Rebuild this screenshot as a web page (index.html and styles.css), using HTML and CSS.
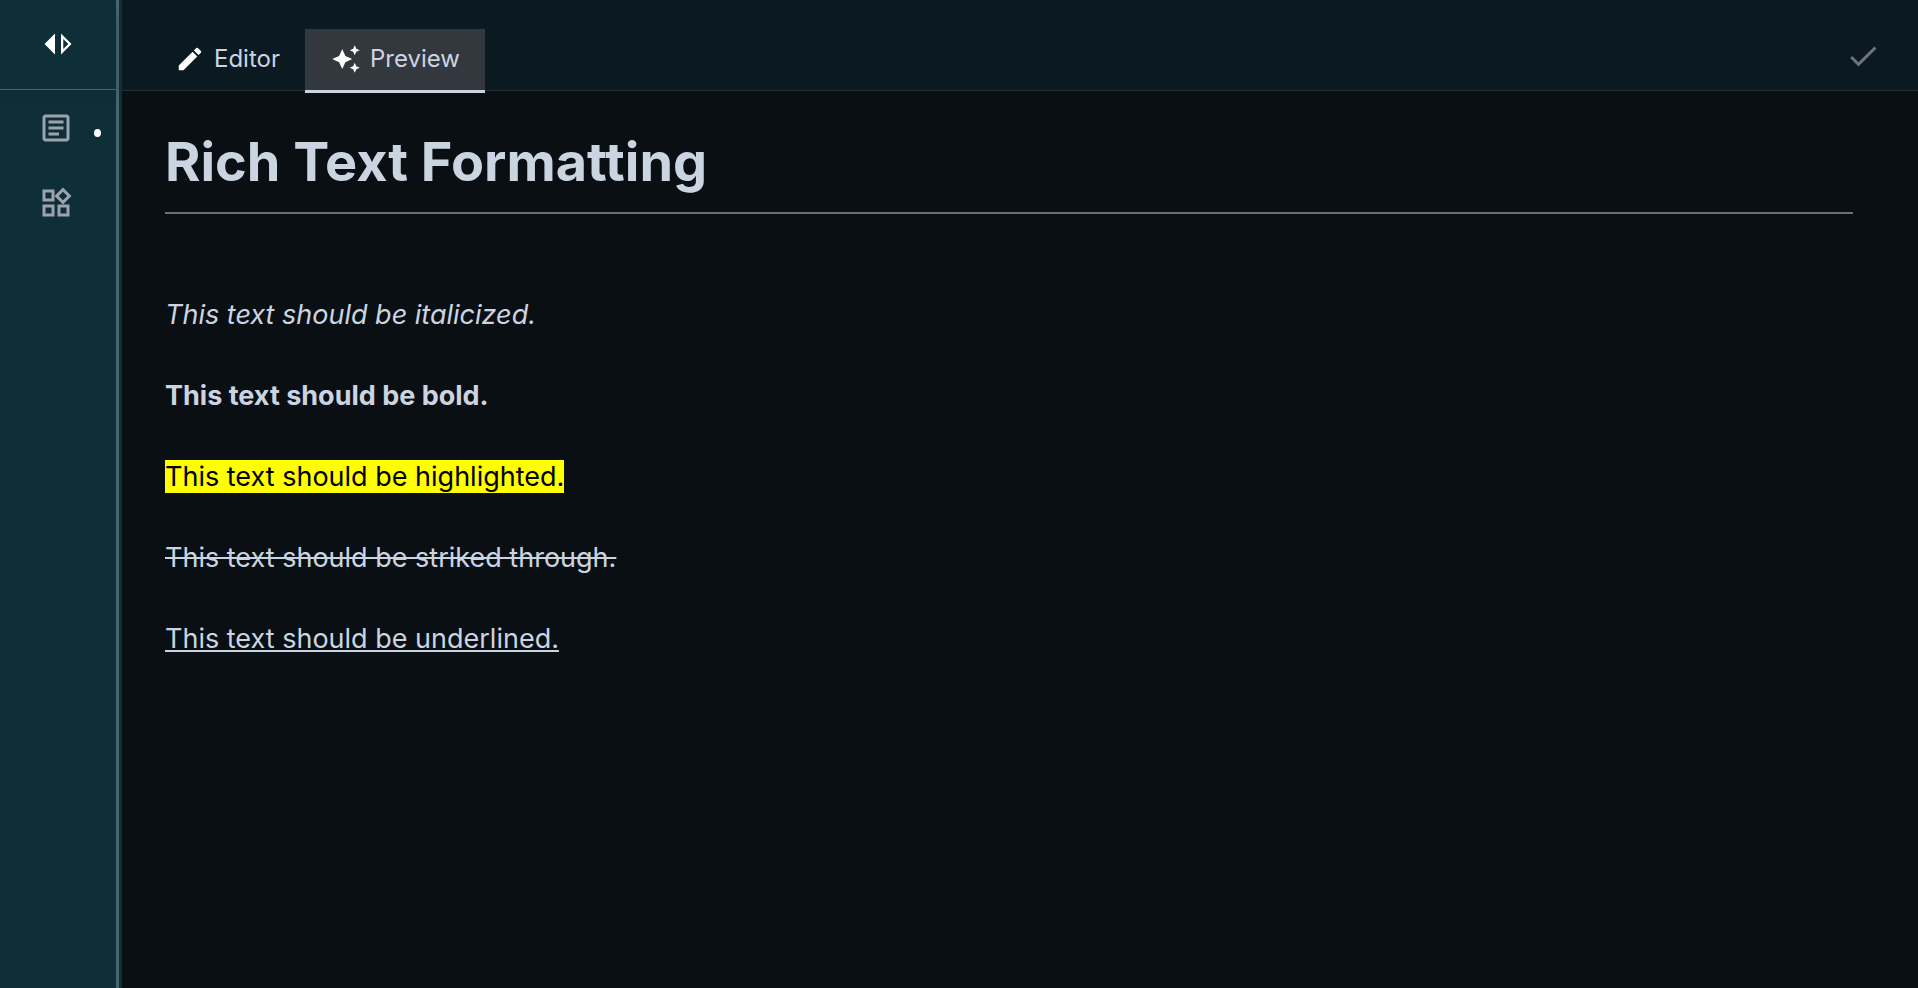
FILE: index.html
```html
<!DOCTYPE html>
<html lang="en">
<head>
<meta charset="utf-8">
<title>Rich Text Formatting</title>
<link rel="stylesheet" href="styles.css">
</head>
<body>
<div class="app">
  <aside class="sidebar">
    <div class="sidebar-top">
      <button class="icon-button" type="button" aria-label="Toggle sidebar">
        <svg class="icon icon-white" viewBox="0 0 24 24"><path d="M15.5 15.38V8.62L18.88 12l-3.38 3.38M14 19l7-7-7-7v14zm-4 0V5l-7 7 7 7z"/></svg>
      </button>
    </div>
    <nav class="sidebar-nav">
      <a class="nav-item" href="#notes" aria-label="Notes">
        <svg class="icon" viewBox="0 0 24 24"><path d="M19 5v14H5V5h14m0-2H5c-1.1 0-2 .9-2 2v14c0 1.1.9 2 2 2h14c1.1 0 2-.9 2-2V5c0-1.1-.9-2-2-2z"/><path d="M14 17H7v-2h7v2zm3-4H7v-2h10v2zm0-4H7V7h10v2z"/></svg>
        <span class="nav-dot"></span>
      </a>
      <a class="nav-item" href="#widgets" aria-label="Widgets">
        <svg class="icon" viewBox="0 0 24 24"><path d="m16.66 4.52 2.83 2.83-2.83 2.83-2.83-2.83 2.83-2.83M9 5v4H5V5h4m10 10v4h-4v-4h4M9 15v4H5v-4h4m7.66-13.31L11 7.34 16.66 13l5.66-5.66-5.66-5.65zM11 3H3v8h8V3zm10 10h-8v8h8v-8zm-10 0H3v8h8v-8z"/></svg>
      </a>
    </nav>
  </aside>
  <div class="workspace">
    <header class="topbar">
      <div class="tabs" role="tablist">
        <button class="tab" type="button" role="tab" aria-selected="false">
          <svg class="tab-icon" viewBox="0 0 24 24"><path d="M3 17.25V21h3.75L17.81 9.94l-3.75-3.75L3 17.25zM20.71 7.04c.39-.39.39-1.02 0-1.41l-2.34-2.34a.9959.9959 0 0 0-1.41 0l-1.83 1.83 3.75 3.75 1.83-1.83z"/></svg>
          Editor
        </button>
        <button class="tab tab-active" type="button" role="tab" aria-selected="true">
          <svg class="tab-icon" viewBox="0 0 24 24"><path d="m19 9 1.25-2.75L23 5l-2.75-1.25L19 1l-1.25 2.75L15 5l2.75 1.25L19 9zm-7.5.5L9 4 6.5 9.5 1 12l5.5 2.5L9 20l2.5-5.5L17 12l-5.5-2.5zM19 15l-1.25 2.75L15 19l2.75 1.25L19 23l1.25-2.75L23 19l-2.75-1.25L19 15z"/></svg>
          Preview
        </button>
      </div>
      <button class="icon-button" type="button" aria-label="Saved">
        <svg class="icon icon-saved" viewBox="0 0 24 24"><path d="M9 16.17 4.83 12l-1.42 1.41L9 19 21 7l-1.41-1.41z"/></svg>
      </button>
    </header>
    <main class="document">
      <h1 class="title">Rich Text Formatting</h1>
      <p class="line"><em>This text should be italicized.</em></p>
      <p class="line"><strong>This text should be bold.</strong></p>
      <p class="line"><mark>This text should be highlighted.</mark></p>
      <p class="line"><s>This text should be striked through.</s></p>
      <p class="line"><u>This text should be underlined.</u></p>
    </main>
  </div>
</div>
</body>
</html>
```

FILE: styles.css
```css
* {
  box-sizing: border-box;
}

body {
  margin: 0;
  background: #0a0f13;
  color: #cbd5e1;
  font-family: Inter, "Liberation Sans", sans-serif;
}

.app {
  display: flex;
  min-height: 100vh;
}

.sidebar {
  flex: none;
  width: 119px;
  background: #0f2f38;
  border-right: 3px solid #4a666c;
}

.sidebar-top {
  display: flex;
  align-items: center;
  justify-content: center;
  height: 90px;
  padding-bottom: 2px;
  border-bottom: 1px solid #4a666c;
  box-shadow: 0 8px 12px -6px #0d2a32;
}

.icon-button {
  display: flex;
  padding: 0;
  border: 0;
  background: none;
}

.icon {
  width: 36px;
  height: 36px;
  fill: #9ca3af;
}

.icon-white {
  fill: #fff;
}

.icon-saved {
  fill: #6b7280;
}

.sidebar-nav {
  display: flex;
  flex-direction: column;
  gap: 39px;
  padding: 20px 15px 0 38px;
}

.nav-item {
  display: flex;
  align-items: center;
  justify-content: space-between;
}

.nav-dot {
  width: 7px;
  height: 8px;
  margin-top: 9px;
  border-radius: 50%;
  background: #fff;
}

.workspace {
  flex: 1;
  border-left: 3px solid #0f2f38;
}

.topbar {
  display: flex;
  align-items: center;
  justify-content: space-between;
  height: 91px;
  padding: 0 37px 0 27px;
  background: #0a1a20;
  border-bottom: 1px solid #1f2d33;
}

.topbar > .icon-button {
  margin-top: 22px;
}

.tabs {
  display: flex;
  align-self: flex-end;
  margin-bottom: -3px;
}

.tab {
  display: flex;
  align-items: center;
  gap: 9px;
  height: 64px;
  padding: 0 25px 2px 26px;
  border: 0;
  border-bottom: 3px solid transparent;
  background: none;
  color: #cbd5e1;
  font: 400 24px/30px Inter, "Liberation Sans", sans-serif;
}

.tab-active {
  background: #33373e;
  border-bottom-color: #cbd5e1;
}

.tab-icon {
  width: 30px;
  height: 30px;
  fill: #fff;
}

.document {
  padding: 36px 65px 60px 43px;
}

.title {
  margin: 0 0 81px;
  padding-bottom: 15px;
  border-bottom: 2px solid #6b7073;
  font-size: 54px;
  line-height: 70px;
  font-weight: 700;
}

.line {
  margin: 0 0 41px;
  font-size: 27px;
  line-height: 40px;
}

.line mark {
  background: #ff0;
  color: #000;
}
```
